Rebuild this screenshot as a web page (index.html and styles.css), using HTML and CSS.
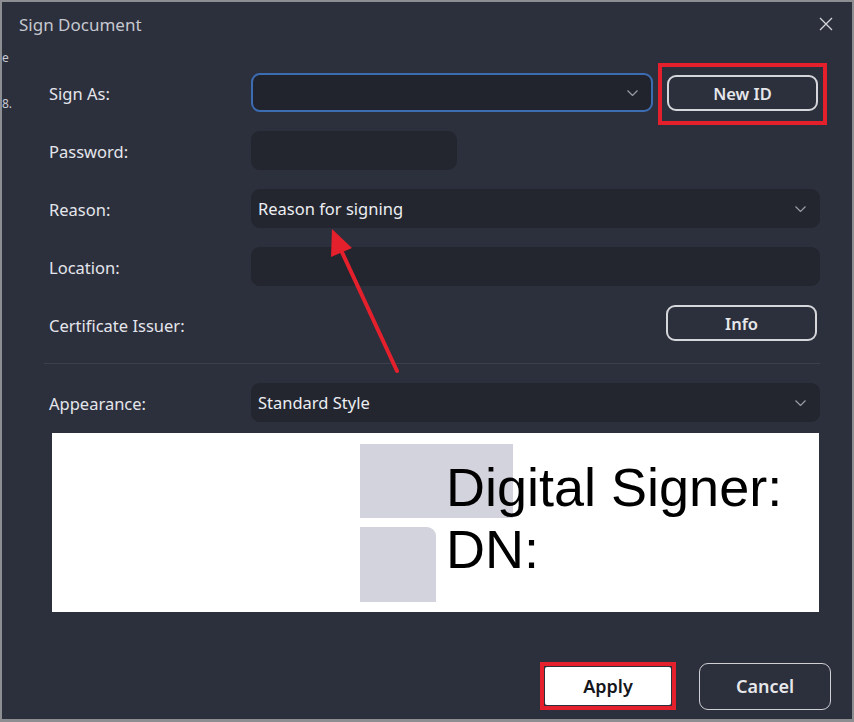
FILE: index.html
```html
<!DOCTYPE html>
<html lang="en">
<head>
    <meta charset="UTF-8">
    <meta name="viewport" content="width=device-width, initial-scale=1.0">
    <title>Sign Document</title>
    <link rel="stylesheet" href="styles.css">
</head>
<body>
    <div class="dialog">
        <span class="stray stray-e">e</span>
        <span class="stray stray-g">8.</span>

        <div class="titlebar">
            <span class="title">Sign Document</span>
            <svg class="close" width="14" height="14" viewBox="0 0 14 14">
                <path d="M1 1 L13 13 M13 1 L1 13" stroke="#d4d6dc" stroke-width="1.3" fill="none"/>
            </svg>
        </div>

        <div class="form">
            <div class="label">Sign As:</div>
            <div class="field-row">
                <div class="select focused">
                    <span></span>
                    <svg class="chev" width="11" height="6" viewBox="0 0 11 6"><path d="M0.5 0.5 L5.5 5.5 L10.5 0.5" stroke="#9a9ca6" stroke-width="1.2" fill="none"/></svg>
                </div>
                <div class="mark mark-top">
                    <button class="btn">New ID</button>
                </div>
            </div>

            <div class="label">Password:</div>
            <div class="field-row">
                <div class="input short"></div>
            </div>

            <div class="label">Reason:</div>
            <div class="field-row">
                <div class="select">
                    <span>Reason for signing</span>
                    <svg class="chev" width="11" height="6" viewBox="0 0 11 6"><path d="M0.5 0.5 L5.5 5.5 L10.5 0.5" stroke="#9a9ca6" stroke-width="1.2" fill="none"/></svg>
                </div>
            </div>

            <div class="label">Location:</div>
            <div class="field-row">
                <div class="input"></div>
            </div>

            <div class="label">Certificate Issuer:</div>
            <div class="field-row end">
                <button class="btn btn-info">Info</button>
            </div>

            <div class="separator"></div>

            <div class="label">Appearance:</div>
            <div class="field-row">
                <div class="select">
                    <span>Standard Style</span>
                    <svg class="chev" width="11" height="6" viewBox="0 0 11 6"><path d="M0.5 0.5 L5.5 5.5 L10.5 0.5" stroke="#9a9ca6" stroke-width="1.2" fill="none"/></svg>
                </div>
            </div>
        </div>

        <div class="preview">
            <div class="logo">
                <div class="sq sq-wide"></div>
                <div class="sq sq-small"></div>
            </div>
            <div class="sig-text">
                <div>Digital Signer:</div>
                <div>DN:</div>
            </div>
        </div>

        <div class="actions">
            <div class="mark mark-apply">
                <button class="btn btn-apply">Apply</button>
            </div>
            <button class="btn btn-cancel">Cancel</button>
        </div>

        <!-- annotation arrow -->
        <svg class="arrow" width="854" height="722" viewBox="0 0 854 722">
            <line x1="397" y1="371" x2="341" y2="250" stroke="#e3202b" stroke-width="4" stroke-linecap="round"/>
            <polygon points="332,229 331,257 352,248" fill="#e3202b"/>
        </svg>
    </div>
</body>
</html>
```

FILE: styles.css
```css
* {
    box-sizing: border-box;
}
body {
    margin: 0;
    background: #2c2f3c;
    font-family: 'Noto Sans', 'Open Sans', sans-serif;
}
.dialog {
    position: relative;
    width: 854px;
    height: 722px;
    border: 2px solid #8d8e92;
    border-bottom-width: 3px;
    background: #2c2f3c;
    color: #e2e4ea;
    overflow: hidden;
}
.stray {
    position: absolute;
    left: 0;
    font-size: 12px;
    color: #c9cbd2;
}
.stray-e {
    top: 47px;
}
.stray-g {
    top: 93px;
}
.titlebar {
    display: flex;
    align-items: center;
    justify-content: space-between;
    height: 44px;
    padding: 0 19px 0 17px;
}
.title {
    font-size: 17px;
    color: #c6c8d0;
}
.form {
    display: grid;
    grid-template-columns: 202px 569px;
    row-gap: 19px;
    margin: 27px 0 0 47px;
}
.label {
    display: flex;
    align-items: center;
    height: 39px;
    padding-top: 2px;
    font-size: 16.5px;
    color: #e4e6ec;
}
.field-row {
    display: flex;
    align-items: center;
    height: 39px;
}
.field-row.end {
    justify-content: flex-end;
    align-items: flex-start;
    padding-right: 3px;
}
.select,
.input {
    display: flex;
    align-items: center;
    justify-content: space-between;
    height: 39px;
    width: 100%;
    padding: 0 14px 0 7px;
    background: #23252f;
    border-radius: 9px;
    font-size: 16.5px;
    color: #eceef2;
}
.input.short {
    width: 206px;
}
.select.focused {
    width: 402px;
    flex: none;
    background: #22242d;
    border: 2px solid #3c6db3;
    padding-right: 13px;
}
.chev {
    flex: none;
}
.btn {
    font-family: inherit;
    font-size: 16.5px;
    font-weight: 600;
    color: #e6e7ea;
    background: #2c2f3c;
    border: 2px solid #d6d7da;
    border-radius: 9px;
    width: 151px;
    height: 36px;
    cursor: pointer;
}
.mark {
    border: 4px solid #e3202b;
}
.mark-top {
    margin: -10px -6px -13px 5px;
    padding: 8px 5px 10px 5px;
}
.separator {
    grid-column: 1 / -1;
    height: 1px;
    margin-left: -5px;
    width: 776px;
    background: #3d404c;
}
.preview {
    display: flex;
    margin: 11px 0 0 50px;
    width: 767px;
    height: 179px;
    padding: 11px 0 0 308px;
    background: #ffffff;
}
.logo {
    flex: none;
    width: 153px;
}
.sq {
    background: #d3d3de;
}
.sq-wide {
    width: 153px;
    height: 74px;
}
.sq-small {
    width: 76px;
    height: 75px;
    margin-top: 9px;
    border-top-right-radius: 9px;
}
.sig-text {
    margin: 12px 0 0 -67px;
    font-family: 'Liberation Sans', Arial, sans-serif;
    font-size: 54px;
    line-height: 62px;
    color: #000000;
    white-space: nowrap;
}
.actions {
    display: flex;
    justify-content: flex-end;
    align-items: center;
    gap: 23px;
    margin-top: 50px;
    padding-right: 21px;
}
.mark-apply {
    padding: 1px;
}
.btn-apply {
    display: block;
    width: 126px;
    height: 38px;
    background: #ffffff;
    border: none;
    border-radius: 2px;
    color: #14161c;
    font-size: 18px;
}
.btn-cancel {
    width: 132px;
    height: 47px;
    border-width: 1.5px;
    border-color: #cfd0d4;
    font-size: 18px;
}
.arrow {
    position: absolute;
    left: -2px;
    top: -2px;
    pointer-events: none;
}
```
